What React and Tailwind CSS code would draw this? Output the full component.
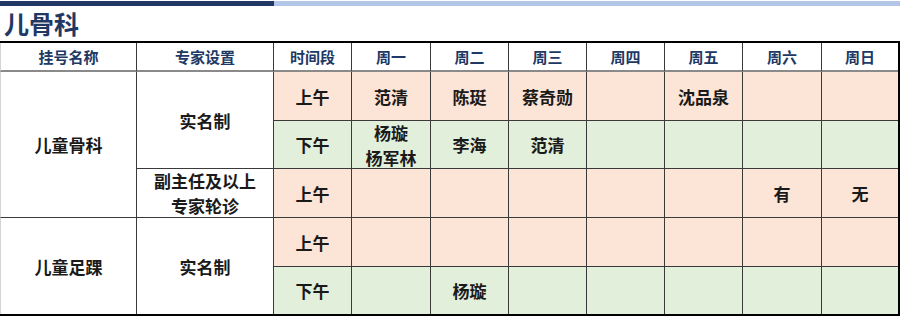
import React from "react";

const FONT = "font-['Noto_Sans_CJK_SC','Noto_Sans',sans-serif]";

const days = ["周一", "周二", "周三", "周四", "周五", "周六", "周日"];

// schedule rows: [row index in grid, time label, colour, cells]
const slots = [
  { row: "row-start-2", label: "上午", am: true, cells: ["范清", "陈珽", "蔡奇勋", "", "沈品泉", "", ""] },
  { row: "row-start-3", label: "下午", am: false, cells: [["杨璇", "杨军林"], "李海", "范清", "", "", "", ""] },
  { row: "row-start-4", label: "上午", am: true, cells: ["", "", "", "", "", "有", "无"] },
  { row: "row-start-5", label: "上午", am: true, cells: ["", "", "", "", "", "", ""] },
  { row: "row-start-6", label: "下午", am: false, cells: ["", "杨璇", "", "", "", "", ""], last: true },
];

const Cell = ({ className = "", children }) => (
  <div
    className={`flex flex-col items-center justify-center text-center border-[#3a3a3a] ${className}`}
  >
    {children}
  </div>
);

const App = () => {
  return (
    <div className={`w-[900px] h-[316px] bg-white ${FONT}`}>
      {/* top accent bar */}
      <div className="flex pt-px h-[6px]">
        <div className="w-[274px] bg-[#203864]" />
        <div className="flex-1 bg-[#b4c6e7]" />
      </div>

      {/* title */}
      <div className="h-[35px] flex items-center pl-1">
        <h1 className="text-[25px] leading-none font-bold text-[#1f3864]">儿骨科</h1>
      </div>

      {/* schedule table */}
      <div className="grid grid-cols-[137px_137px_78px_79px_78px_78px_78px_78px_79px_76px] grid-rows-[29px_49px_48px_49px_49px_47px] border-t-2 border-b-2 border-r-2 border-black text-[17px] font-bold text-[#1a1a1a] leading-[25px]">
        {/* header */}
        {["挂号名称", "专家设置", "时间段", ...days].map((h, i) => (
          <Cell
            key={h}
            className={`row-start-1 border-b-2 border-b-[#8a8a8a] text-[15px] text-[#203864] ${
              i < 9 ? "border-r" : ""
            } ${i === 0 ? "border-l border-l-[#d4d4d4]" : ""}`}
          >
            {h}
          </Cell>
        ))}

        {/* department column */}
        <Cell className="col-start-1 row-start-2 row-span-3 border-r border-b border-l border-l-[#d4d4d4]">
          儿童骨科
        </Cell>
        <Cell className="col-start-1 row-start-5 row-span-2 border-r border-l border-l-[#d4d4d4]">
          儿童足踝
        </Cell>

        {/* expert setting column */}
        <Cell className="col-start-2 row-start-2 row-span-2 border-r border-b">实名制</Cell>
        <Cell className="col-start-2 row-start-4 border-r border-b">
          <span>副主任及以上</span>
          <span>专家轮诊</span>
        </Cell>
        <Cell className="col-start-2 row-start-5 row-span-2 border-r">实名制</Cell>

        {/* time slots and days */}
        {slots.map((s, r) => (
          <React.Fragment key={r}>
            <Cell
              className={`col-start-3 ${s.row} border-r ${s.last ? "" : "border-b"} ${
                s.am ? "bg-[#fce4d6]" : "bg-[#e2efda]"
              }`}
            >
              {s.label}
            </Cell>
            {s.cells.map((c, i) => (
              <Cell
                key={i}
                className={`${s.row} ${i < 6 ? "border-r" : ""} ${s.last ? "" : "border-b"} ${
                  s.am ? "bg-[#fce4d6]" : "bg-[#e2efda]"
                }`}
              >
                {Array.isArray(c) ? c.map((line) => <span key={line}>{line}</span>) : c}
              </Cell>
            ))}
          </React.Fragment>
        ))}
      </div>
    </div>
  );
};

export default App;
